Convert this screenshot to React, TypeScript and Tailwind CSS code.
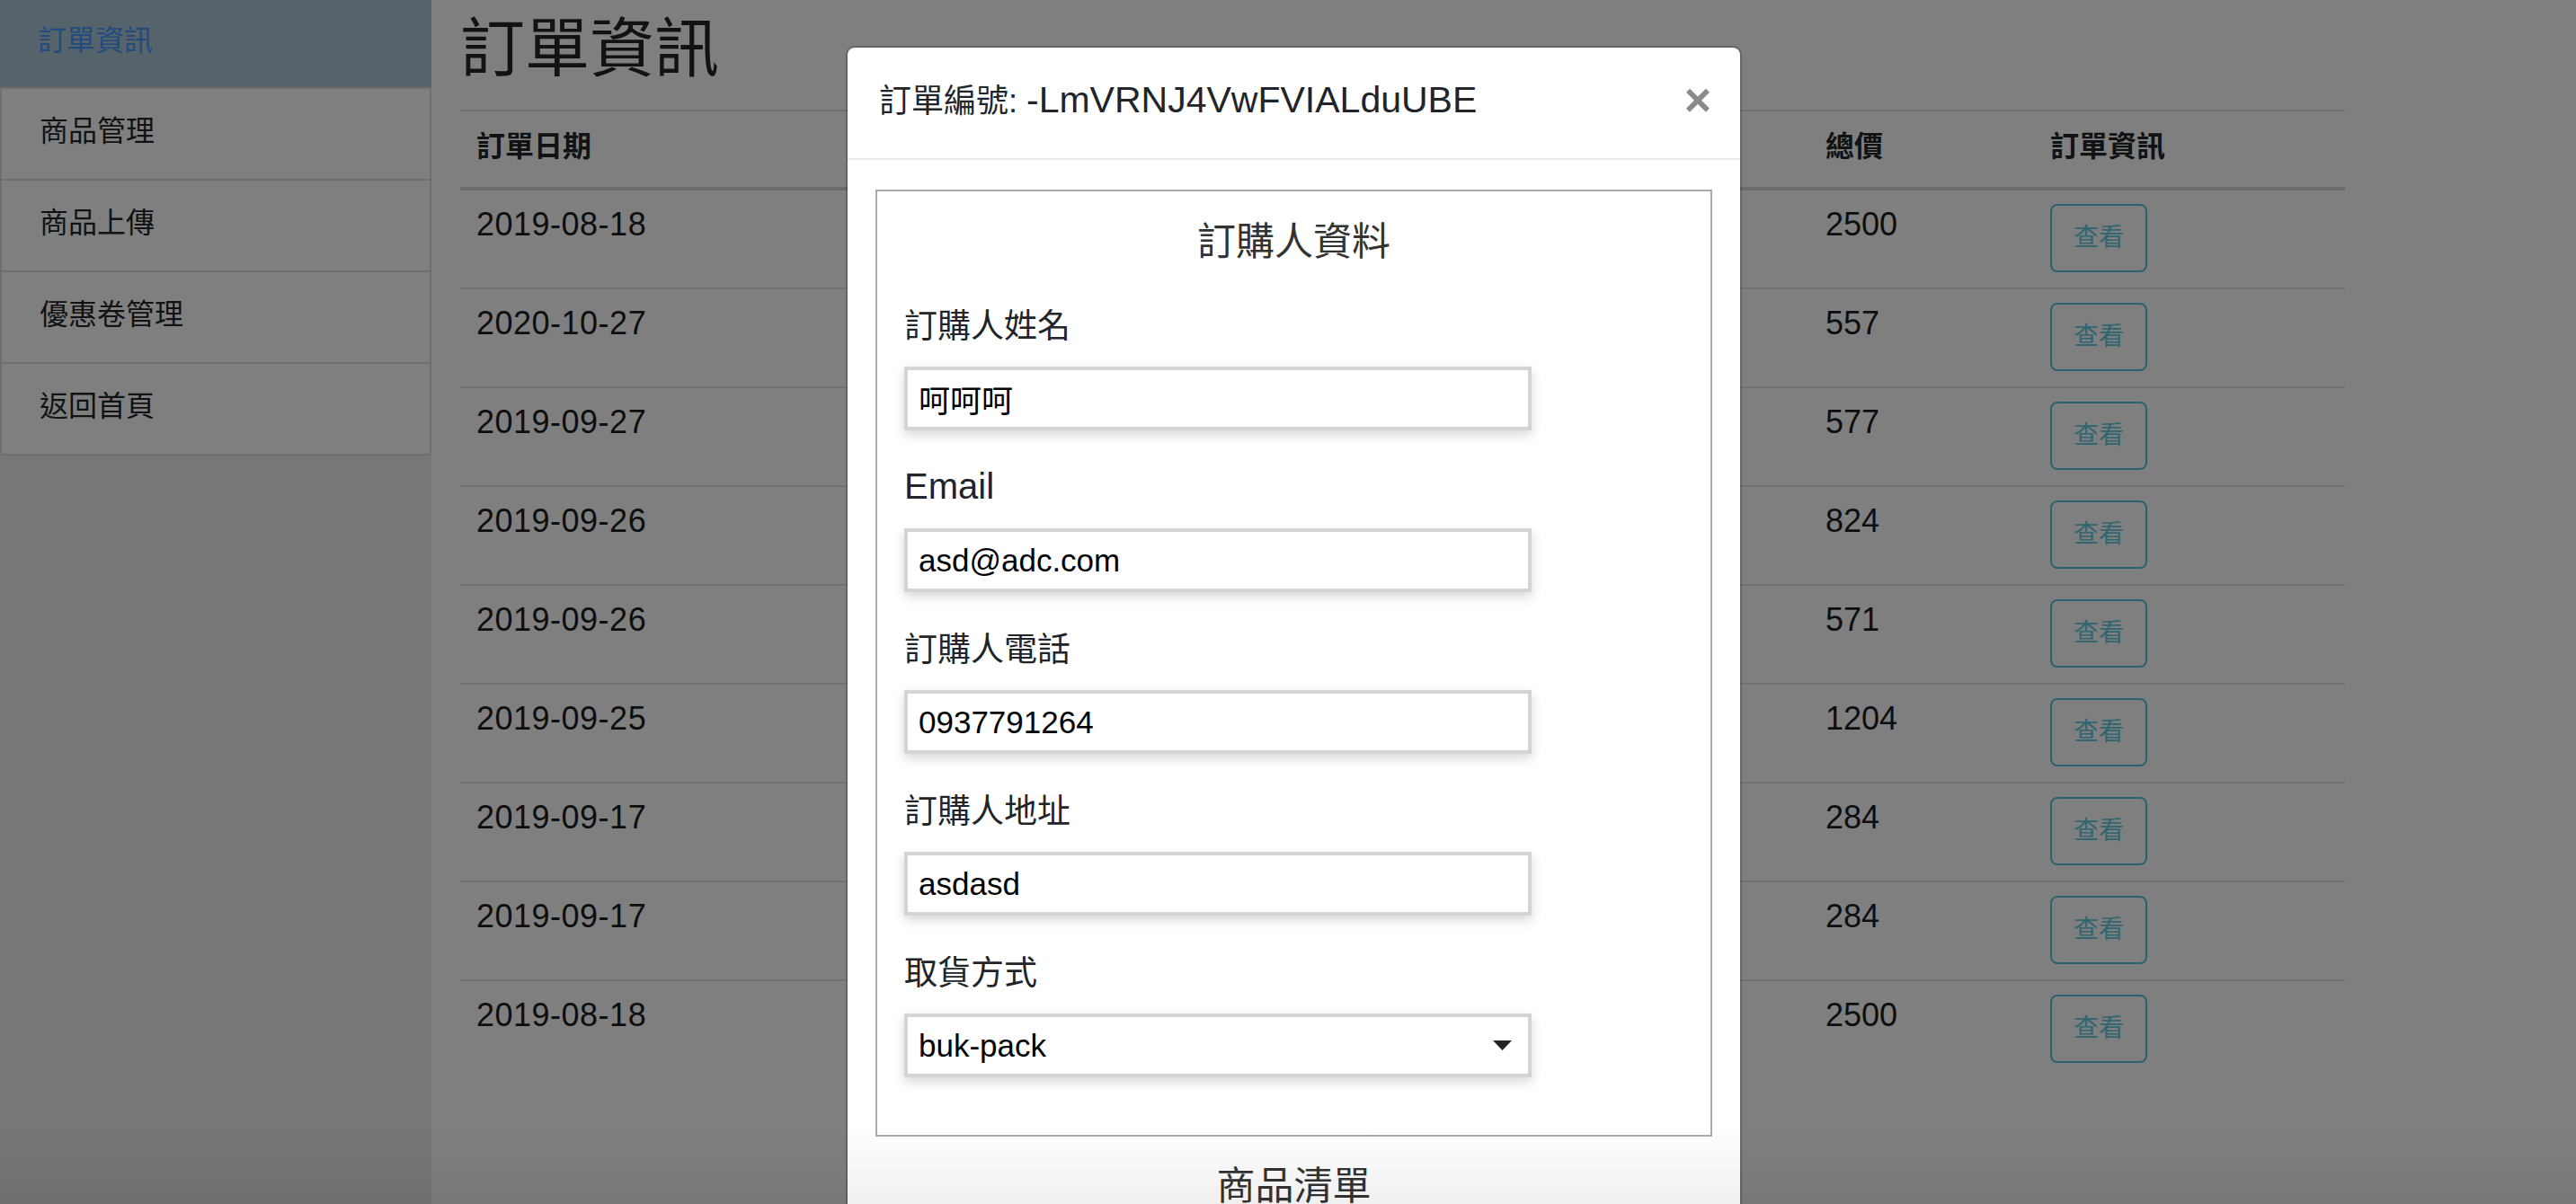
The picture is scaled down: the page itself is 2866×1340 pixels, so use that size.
import React from "react";

const orders = [
  { date: "2019-08-18", total: 2500 },
  { date: "2020-10-27", total: 557 },
  { date: "2019-09-27", total: 577 },
  { date: "2019-09-26", total: 824 },
  { date: "2019-09-26", total: 571 },
  { date: "2019-09-25", total: 1204 },
  { date: "2019-09-17", total: 284 },
  { date: "2019-09-17", total: 284 },
  { date: "2019-08-18", total: 2500 },
];

const menu = ["商品管理", "商品上傳", "優惠卷管理", "返回首頁"];

const fields = [
  { label: "訂購人姓名", value: "呵呵呵", latin: false },
  { label: "Email", value: "asd@adc.com", latin: true },
  { label: "訂購人電話", value: "0937791264", latin: false },
  { label: "訂購人地址", value: "asdasd", latin: false },
];

function Sidebar() {
  return (
    <aside className="h-full w-[480px] shrink-0 bg-[#eeeeee]">
      <div className="flex h-[97px] items-center bg-[#acc6d4] pb-[8px] pl-[42px] text-[32px] leading-[48px] text-[#3e96ff]">
        訂單資訊
      </div>
      {menu.map((m, i) => (
        <div
          key={m}
          className={
            i === menu.length - 1
              ? "flex h-[104px] w-[480px] items-center border-x-2 border-y-2 border-[#dcdcdc] bg-white pb-[6px] pl-[42px] text-[32px] leading-[48px] text-[#212529]"
              : "flex h-[102px] w-[480px] items-center border-x-2 border-t-2 border-[#dcdcdc] bg-white pb-[6px] pl-[42px] text-[32px] leading-[48px] text-[#212529]"
          }
        >
          {m}
        </div>
      ))}
    </aside>
  );
}

function OrdersTable() {
  return (
    <div className="mt-[26px] w-[2097px]">
      <div className="grid h-[90px] grid-cols-[430px_560px_511px_250px_346px] border-t-2 border-b-4 border-[#e2e2e2] border-b-[#d6d6d6] text-[32px] font-bold leading-[48px] text-[#212529]">
        <div className="pl-[18px] pt-[15px]">訂單日期</div>
        <div />
        <div />
        <div className="pl-[18px] pt-[15px]">總價</div>
        <div className="pl-[18px] pt-[15px]">訂單資訊</div>
      </div>
      {orders.map((o, i) => (
        <div
          key={i}
          className={
            i === 0
              ? "grid h-[108px] grid-cols-[430px_560px_511px_250px_346px] text-[36px] leading-[54px] text-[#1a1d20]"
              : "grid h-[110px] grid-cols-[430px_560px_511px_250px_346px] border-t-2 border-[#e4e4e4] text-[36px] leading-[54px] text-[#1a1d20]"
          }
        >
          <div className="pl-[18px] pt-[11px] tracking-[0.5px]">{o.date}</div>
          <div />
          <div />
          <div className="pl-[18px] pt-[11px]">{o.total}</div>
          <div className="pl-[18px] pt-[15px]">
            <button className="flex h-[76px] w-[108px] items-center justify-center rounded-[8px] border-2 border-[#54c4dc] text-[28px] leading-none text-[#5ecce2]">
              查看
            </button>
          </div>
        </div>
      ))}
    </div>
  );
}

function Field({ label, value, latin, first }: { label: string; value: string; latin: boolean; first: boolean }) {
  return (
    <div className={first ? "pt-[46px]" : "pt-[42px]"}>
      <div
        className={
          latin
            ? "h-[46px] text-[40px] leading-[40px] text-[#212529]"
            : "h-[46px] text-[37px] leading-[46px] text-[#212529]"
        }
      >
        {label}
      </div>
      <input
        readOnly
        defaultValue={value}
        className="mt-[21px] block h-[71px] w-[698px] border-4 border-[#d4d4d4] bg-white px-[12px] text-[35px] leading-[44px] text-black shadow-[0_5px_12px_rgba(0,0,0,0.16)] outline-none"
      />
    </div>
  );
}

function Modal() {
  return (
    <div className="w-[997px] rounded-t-[10px] border-2 border-black/20 bg-white bg-clip-padding">
      <div className="flex h-[125px] items-center justify-between border-b-2 border-[#e7e7ee] pb-[6px] pl-[35px] pr-[32px] text-[#212529]">
        <div className="flex items-baseline whitespace-pre">
          <span className="text-[36px] leading-[48px]">訂單編號: </span>
          <span className="text-[41px] leading-[48px]">-LmVRNJ4VwFVIALduUBE</span>
        </div>
        <button className="pb-[2px] text-[52px] font-bold leading-none text-[#8a8a8a]">×</button>
      </div>
      <div className="px-[31px] pt-[33px]">
        <div className="border-2 border-[#aaaaaa] pb-[64px] pl-[30px]">
          <div className="pt-[30px] pr-[30px] text-center text-[43px] leading-[52px] text-[#333333]">
            訂購人資料
          </div>
          <div className="flex flex-col">
            {fields.map((f, i) => (
              <Field key={f.label} label={f.label} value={f.value} latin={f.latin} first={i === 0} />
            ))}
            <div className="pt-[42px]">
              <div className="h-[46px] text-[37px] leading-[46px] text-[#212529]">取貨方式</div>
              <div className="mt-[21px] flex h-[71px] w-[698px] items-center justify-between border-4 border-[#d4d4d4] bg-white pl-[12px] pr-[18px] text-[35px] leading-[44px] text-black shadow-[0_5px_12px_rgba(0,0,0,0.16)]">
                <span>buk-pack</span>
                <svg width="21" height="11" viewBox="0 0 21 11">
                  <path d="M0 0 L21 0 L10.5 11 Z" fill="#222222" />
                </svg>
              </div>
            </div>
          </div>
        </div>
        <div className="pt-[29px] text-center text-[43px] leading-[52px] text-[#333333]">商品清單</div>
        <div className="h-[400px]" />
      </div>
    </div>
  );
}

export default function App() {
  return (
    <div className="relative flex h-[1340px] w-[2866px] overflow-hidden bg-white font-['Liberation_Sans','Noto_Sans_CJK_TC',sans-serif]">
      <Sidebar />
      <main className="flex-1 pl-[32px]">
        <h1 className="pt-[12px] text-[72px] font-normal leading-[84px] text-[#212529]">訂單資訊</h1>
        <OrdersTable />
      </main>
      <div className="absolute inset-0 overflow-hidden bg-black/50 pl-[941px] pt-[51px]">
        <Modal />
      </div>
      <div className="pointer-events-none absolute inset-x-0 bottom-0 h-[90px] bg-linear-to-b from-transparent to-black/[0.06]" />
    </div>
  );
}
